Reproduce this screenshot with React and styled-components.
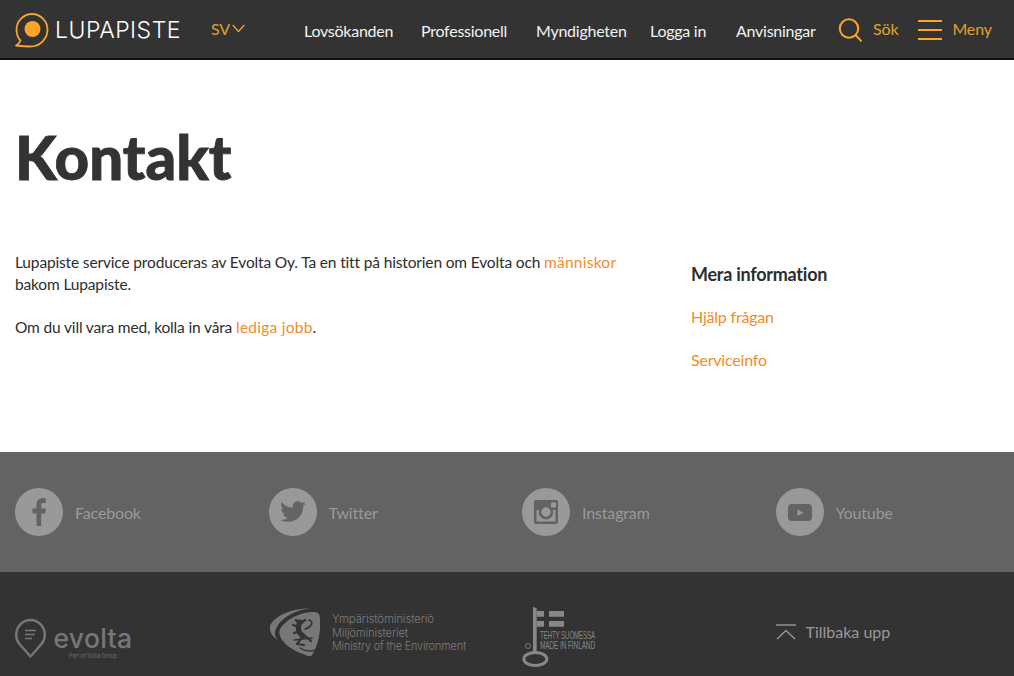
import React from 'react'
import styled, { createGlobalStyle } from 'styled-components'

const ORANGE = '#f9a52b'
const LINK = '#f28c28'

const GlobalStyle = createGlobalStyle`
  html, body {
    margin: 0;
    padding: 0;
    background: #fff;
    font-family: 'Lato', 'Liberation Sans', sans-serif;
    font-size: 16px;
    letter-spacing: -0.15px;
    color: #2d2d2d;
  }
  * { box-sizing: border-box; }
`

const Page = styled.div`
  width: 100%;
  height: 676px;
  overflow: hidden;
`

const Header = styled.header`
  display: flex;
  align-items: center;
  height: 60px;
  padding: 2px 0 0 15px;
  background: #333;
  border-bottom: 2px solid #111;
`

const Logo = styled.div`
  display: flex;
  flex: none;
  align-items: center;
  gap: 6px;
  width: 196px;
`

const LogoText = styled.span`
  color: #fff;
  font-size: 23px;
  line-height: 1;
  letter-spacing: 0.5px;
  font-family: 'Inter', sans-serif;
  font-weight: 300;
`

const Lang = styled.div`
  display: flex;
  flex: none;
  align-items: center;
  gap: 2px;
  width: 93px;
  margin-top: -3px;
  color: #e0a030;
`

const Nav = styled.nav`
  display: flex;
  flex: none;
  align-items: center;
`

const NavLink = styled.a`
  flex: none;
  width: ${(p) => p.$width}px;
  color: #f2f2f2;
  font-size: 16px;
  letter-spacing: -0.25px;
`

const HeaderAction = styled.div`
  display: flex;
  flex: none;
  align-items: center;
  gap: 10px;
  margin-left: ${(p) => p.$left}px;
  color: #e0a030;
`

const ActionLabel = styled.span`
  margin-top: -4px;
`

const Main = styled.main`
  height: 392px;
  padding: 60px 15px 0;
`

const Title = styled.h1`
  margin: 0 0 57px;
  height: 74px;
  font-size: 60px;
  line-height: 74px;
  font-weight: 900;
  letter-spacing: 0;
  color: #333;
  -webkit-text-stroke: 0.8px #333;
`

const Columns = styled.div`
  display: grid;
  grid-template-columns: 676px 1fr;
`

const Paragraph = styled.p`
  margin: 0 0 21px;
  font-size: 15.5px;
  line-height: 22px;
  width: 620px;
`

const Link = styled.a`
  color: ${LINK};
  letter-spacing: 0.25px;
`

const SideTitle = styled.h3`
  margin: 0 0 21px;
  padding-top: 12px;
  font-size: 18px;
  line-height: 22px;
  font-weight: 700;
  letter-spacing: -0.25px;
`

const SideLink = styled.a`
  display: block;
  margin-bottom: 21px;
  line-height: 22px;
  letter-spacing: -0.2px;
  color: ${LINK};
`

const Social = styled.section`
  display: grid;
  grid-template-columns: repeat(4, 1fr);
  align-items: center;
  height: 120px;
  background: #636363;
`

const SocialItem = styled.a`
  display: flex;
  align-items: center;
  gap: 12px;
  padding-left: 15px;
  color: #999;
`

const SocialIcon = styled.span`
  display: flex;
  align-items: center;
  justify-content: center;
  width: 48px;
  height: 48px;
  border-radius: 50%;
  background: #999;
`

const Footer = styled.footer`
  display: grid;
  grid-template-columns: repeat(4, 1fr);
  height: 104px;
  background: #333;
`

const FooterCell = styled.div`
  display: flex;
  align-items: flex-start;
  padding: ${(p) => p.$top}px 0 0 15px;
`

const BackUp = styled.a`
  display: flex;
  align-items: center;
  gap: 10px;
  letter-spacing: 0;
  color: #999;
`

const PinMark = () => (
  <svg width="34" height="35" viewBox="0 0 34 35">
    <path
      d="M5.500 27.500C2.500 24.500 1.500 20.500 1.500 16.500 1.500 8 8.500 1 17 1c8.500 0 15.500 7 15.500 15.500C32.500 26 25 33.500 15 33.500 10 33.500 5 33 1 32.500c2-1 3.500-2.500 4.500-5z"
      fill="none"
      stroke={ORANGE}
      strokeWidth="1.800"
      strokeLinejoin="round"
    />
    <circle cx="17.500" cy="16" r="8" fill={ORANGE} />
  </svg>
)

const Chevron = () => (
  <svg width="13" height="9" viewBox="0 0 13 9">
    <path d="M.7 1 6.500 7.500 12.300 1" fill="none" stroke={ORANGE} strokeWidth="1.200" />
  </svg>
)

const SearchIcon = () => (
  <svg width="25" height="25" viewBox="0 0 25 25">
    <circle cx="11" cy="10.500" r="9.200" fill="none" stroke={ORANGE} strokeWidth="2" />
    <path d="M17.500 17 23.600 23.400" stroke={ORANGE} strokeWidth="2" />
  </svg>
)

const MenuIcon = () => (
  <svg width="24" height="20" viewBox="0 0 24 20">
    <path d="M0 1h24M0 10h24M0 19h24" stroke={ORANGE} strokeWidth="2" />
  </svg>
)

const FacebookIcon = () => (
  <svg width="48" height="48" viewBox="0 0 48 48">
    <path
      d="M21.500 38V25.500h-4v-5h4v-4c0-4 2.400-6.200 6-6.200 1.700 0 2.800.1 3.300.2v4.400h-2.300c-1.900 0-2.300.9-2.300 2.200v3.400h4.600l-.6 5h-4V38z"
      fill="#636363"
    />
  </svg>
)

const TwitterIcon = () => (
  <svg width="26" height="22" viewBox="0 0 24 20">
    <path
      d="M24 2.400c-.9.400-1.800.7-2.800.8 1-.6 1.800-1.600 2.200-2.700-1 .6-2 1-3.100 1.200C19.300.7 18 0 16.600 0c-2.700 0-4.900 2.200-4.900 4.900 0 .4 0 .8.100 1.100C7.700 5.800 4.100 3.900 1.700.9c-.4.7-.7 1.600-.7 2.500 0 1.700.9 3.200 2.200 4.100-.8 0-1.600-.2-2.200-.6v.1c0 2.400 1.700 4.400 3.900 4.800-.4.100-.8.200-1.300.2-.3 0-.6 0-.9-.1.6 2 2.400 3.400 4.600 3.400-1.700 1.300-3.800 2.100-6.100 2.100-.4 0-.8 0-1.200-.1C2.200 18.200 4.800 19 7.500 19c9.100 0 14-7.500 14-14v-.6c1-.7 1.800-1.500 2.500-2z"
      fill="#636363"
    />
  </svg>
)

const InstagramIcon = () => (
  <svg width="24" height="24" viewBox="0 0 24 24">
    <path
      fillRule="evenodd"
      d="M2 0h20a2 2 0 0 1 2 2v20a2 2 0 0 1-2 2H2a2 2 0 0 1-2-2V2a2 2 0 0 1 2-2zm16 2.500a1 1 0 0 0-1 1v3a1 1 0 0 0 1 1h3a1 1 0 0 0 1-1v-3a1 1 0 0 0-1-1zM2.500 10v11a.6.6 0 0 0 .6.6h17.800a.6.6 0 0 0 .6-.6V10h-2.700a7.200 7.200 0 1 1-13.600 0zM12 7.300a4.700 4.700 0 1 0 0 9.400 4.700 4.700 0 0 0 0-9.400z"
      fill="#636363"
    />
  </svg>
)

const YoutubeIcon = () => (
  <svg width="24" height="17" viewBox="0 0 24 17">
    <path
      fillRule="evenodd"
      d="M4 0h16a4 4 0 0 1 4 4v9a4 4 0 0 1-4 4H4a4 4 0 0 1-4-4V4a4 4 0 0 1 4-4zm5.500 5.500v6.500l6-3.250z"
      fill="#636363"
    />
  </svg>
)

const EvoltaLogo = () => (
  <svg width="120" height="44" viewBox="0 0 120 44">
    <path
      d="M15.500 38.500 4.500 26C2.300 23.400 1.200 20.500 1.200 17 1.200 8.700 7.600 2 15.500 2s14.300 6.700 14.300 15c0 3.500-1.100 6.400-3.300 9z"
      fill="none"
      stroke="#777"
      strokeWidth="2.400"
      strokeLinejoin="round"
    />
    <path d="M10 12.500h11M10 16.500h10M10 20.500h7" stroke="#777" strokeWidth="1.700" />
    <text x="38.500" y="30" fontFamily="Inter, sans-serif" fontWeight="500" fontSize="26.500" fill="#777" letterSpacing="0.300">
      evolta
    </text>
    <text
      x="54"
      y="40"
      fontFamily="Inter, sans-serif"
      fontSize="5.500"
      fill="#6c6c6c"
      textLength="48"
      lengthAdjust="spacingAndGlyphs"
    >
      Part of Sollia Group
    </text>
  </svg>
)

const MinistryLogo = () => (
  <svg width="200" height="52" viewBox="-1 0 200 52">
    <path d="M0 19C4 9 22 1 41 1.500 30 2 11 9 6 22 4 26 5 30 8 33 3 30-1 25 0 19z" fill="#777" />
    <path d="M10 22C17 11 31 5 44 5c5 0 6 3 6 7 1 13-2 27-8 36-1 2-5 1-9-1C21 43 6 32 10 22z" fill="#777" />
    <g fill="none" stroke="#333" strokeLinecap="round" strokeLinejoin="round">
      <path d="M26 13l4 4 5-4" strokeWidth="2.500" />
      <path d="M30 15C27 20 28 26 33 29" strokeWidth="5" />
      <path d="M29 20 23 18M30 24l-6 2" strokeWidth="2.200" />
      <path d="M35 22C42 20 44 14 39 13" strokeWidth="1.600" />
      <path d="M24 33 42 31" strokeWidth="1.400" />
      <path d="M33 29 27 37l7 1M34 28l7 6" strokeWidth="2.200" />
      <path d="M30 41C36 45 42 45 49 42" strokeWidth="1.500" />
    </g>
    <g fontFamily="Inter, sans-serif" fontWeight="300" fill="#7c7c7c">
      <text x="62" y="16" fontSize="11.500" textLength="102" lengthAdjust="spacingAndGlyphs">
        Ympäristöministeriö
      </text>
      <text x="62" y="29.500" fontSize="11.500" textLength="76" lengthAdjust="spacingAndGlyphs">
        Miljöministeriet
      </text>
      <text x="62" y="42.500" fontSize="11" textLength="134" lengthAdjust="spacingAndGlyphs">
        Ministry of the Environment
      </text>
    </g>
  </svg>
)

const KeyLogo = () => (
  <svg width="125" height="62" viewBox="0 0 125 62">
    <path d="M11 0 14.700 1V46H11z" fill="#888" />
    <path d="M14.700 4H22v5.700h-7.300zM14.700 14H22v5.700h-7.300zM27 4h15v5.700H27zM27 14h15v5.700H27z" fill="#888" />
    <ellipse cx="13.300" cy="52" rx="11.500" ry="6.500" fill="none" stroke="#888" strokeWidth="3" />
    <circle cx="6" cy="39" r="2.500" fill="none" stroke="#777" strokeWidth="1" />
    <g fontFamily="'Liberation Sans Narrow', 'Liberation Sans', sans-serif" fontSize="10.500" fill="#888">
      <text x="18" y="32.300" textLength="55" lengthAdjust="spacingAndGlyphs">
        TEHTY SUOMESSA
      </text>
      <text x="18" y="42.300" textLength="55" lengthAdjust="spacingAndGlyphs">
        MADE IN FINLAND
      </text>
    </g>
  </svg>
)

const UpIcon = () => (
  <svg width="20" height="16" viewBox="0 0 20 16">
    <path d="M0 1h20" stroke="#999" strokeWidth="1.400" />
    <path d="M1 15 10 6.500 19 15" fill="none" stroke="#999" strokeWidth="1.400" />
  </svg>
)

const navLinks = [
  { label: 'Lovsökanden', width: 117 },
  { label: 'Professionell', width: 115 },
  { label: 'Myndigheten', width: 114 },
  { label: 'Logga in', width: 86 },
  { label: 'Anvisningar', width: 102 },
]

const socials = [
  { label: 'Facebook', icon: <FacebookIcon /> },
  { label: 'Twitter', icon: <TwitterIcon /> },
  { label: 'Instagram', icon: <InstagramIcon /> },
  { label: 'Youtube', icon: <YoutubeIcon /> },
]

export default function App() {
  return (
    <Page>
      <GlobalStyle />
      <Header>
        <Logo>
          <PinMark />
          <LogoText>LUPAPISTE</LogoText>
        </Logo>
        <Lang>
          SV <Chevron />
        </Lang>
        <Nav>
          {navLinks.map((link) => (
            <NavLink key={link.label} $width={link.width}>
              {link.label}
            </NavLink>
          ))}
        </Nav>
        <HeaderAction $left={0}>
          <SearchIcon />
          <ActionLabel>Sök</ActionLabel>
        </HeaderAction>
        <HeaderAction $left={20}>
          <MenuIcon />
          <ActionLabel>Meny</ActionLabel>
        </HeaderAction>
      </Header>

      <Main>
        <Title>Kontakt</Title>
        <Columns>
          <div>
            <Paragraph>
              Lupapiste service produceras av Evolta Oy. Ta en titt på historien om Evolta och{' '}
              <Link>människor</Link> bakom Lupapiste.
            </Paragraph>
            <Paragraph>
              Om du vill vara med, kolla in våra <Link>lediga jobb</Link>.
            </Paragraph>
          </div>
          <div>
            <SideTitle>Mera information</SideTitle>
            <SideLink>Hjälp frågan</SideLink>
            <SideLink>Serviceinfo</SideLink>
          </div>
        </Columns>
      </Main>

      <Social>
        {socials.map((item) => (
          <SocialItem key={item.label}>
            <SocialIcon>{item.icon}</SocialIcon>
            {item.label}
          </SocialItem>
        ))}
      </Social>

      <Footer>
        <FooterCell $top={46}>
          <EvoltaLogo />
        </FooterCell>
        <FooterCell $top={35}>
          <MinistryLogo />
        </FooterCell>
        <FooterCell $top={35}>
          <KeyLogo />
        </FooterCell>
        <FooterCell $top={50}>
          <BackUp>
            <UpIcon />
            Tillbaka upp
          </BackUp>
        </FooterCell>
      </Footer>
    </Page>
  )
}
